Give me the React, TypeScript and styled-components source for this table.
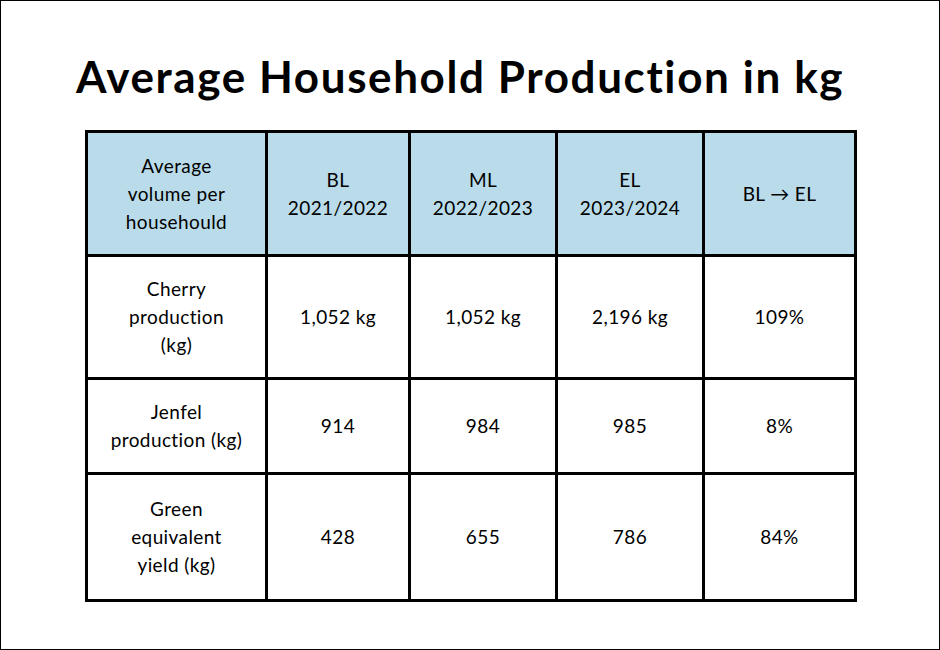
import React from 'react';
import styled, { createGlobalStyle } from 'styled-components';

const GlobalStyle = createGlobalStyle`
 html, body {
   margin: 0;
   padding: 0;
   background: #fff;
 }
`;

const Frame = styled.div`
 width: 940px;
 height: 650px;
 box-sizing: border-box;
 border: 1px solid #000;
 background: #fff;
 color: #000;
 font-family: Lato, "Open Sans", sans-serif;
 padding: 48px 0 0 75px;
`;

const Title = styled.h1`
 margin: 0 0 27px 0;
 font-size: 44px;
 font-weight: 700;
 line-height: 54px;
 letter-spacing: 1.6px;
`;

const Table = styled.table`
 margin-left: 9px;
 border-collapse: collapse;
 border: 3px solid #000;
 table-layout: fixed;
 width: 769px;
`;

const Col = styled.col<{ $w: number }>`
 width: ${(p) => p.$w}px;
`;

const Row = styled.tr<{ $h: number }>`
 height: ${(p) => p.$h}px;
`;

const HeadCell = styled.th`
 background: #b9dbea;
 border: 3px solid #000;
 font-weight: 400;
 font-size: 19px;
 line-height: 28px;
 letter-spacing: 0.4px;
 text-align: center;
 vertical-align: middle;
 padding: 0 8px;
`;

const Cell = styled.td`
 border: 3px solid #000;
 font-size: 19px;
 line-height: 28px;
 letter-spacing: 0.4px;
 text-align: center;
 vertical-align: middle;
 padding: 0 8px;
`;

const widths = [180, 143, 147, 147, 152];

const heads = [
 ['Average', 'volume per', 'househould'],
 ['BL', '2021/2022'],
 ['ML', '2022/2023'],
 ['EL', '2023/2024'],
 ['BL → EL'],
];

const rows = [
 { h: 123, cells: [['Cherry', 'production', '(kg)'], ['1,052 kg'], ['1,052 kg'], ['2,196 kg'], ['109%']] },
 { h: 95, cells: [['Jenfel', 'production (kg)'], ['914'], ['984'], ['985'], ['8%']] },
 { h: 127, cells: [['Green', 'equivalent', 'yield (kg)'], ['428'], ['655'], ['786'], ['84%']] },
];

const Lines = ({ items }: { items: string[] }) => (
 <>
   {items.map((t, i) => (
     <React.Fragment key={i}>
       {i > 0 && <br />}
       {t}
     </React.Fragment>
   ))}
 </>
);

const App = () => {
 return (
   <>
     <GlobalStyle />
     <Frame>
       <Title>Average Household Production in kg</Title>
       <Table>
         <colgroup>
           {widths.map((w, i) => (
             <Col key={i} $w={w} />
           ))}
         </colgroup>
         <thead>
           <Row $h={124}>
             {heads.map((h, i) => (
               <HeadCell key={i}>
                 <Lines items={h} />
               </HeadCell>
             ))}
           </Row>
         </thead>
         <tbody>
           {rows.map((r, i) => (
             <Row key={i} $h={r.h}>
               {r.cells.map((c, j) => (
                 <Cell key={j}>
                   <Lines items={c} />
                 </Cell>
               ))}
             </Row>
           ))}
         </tbody>
       </Table>
     </Frame>
   </>
 );
};

export default App;
